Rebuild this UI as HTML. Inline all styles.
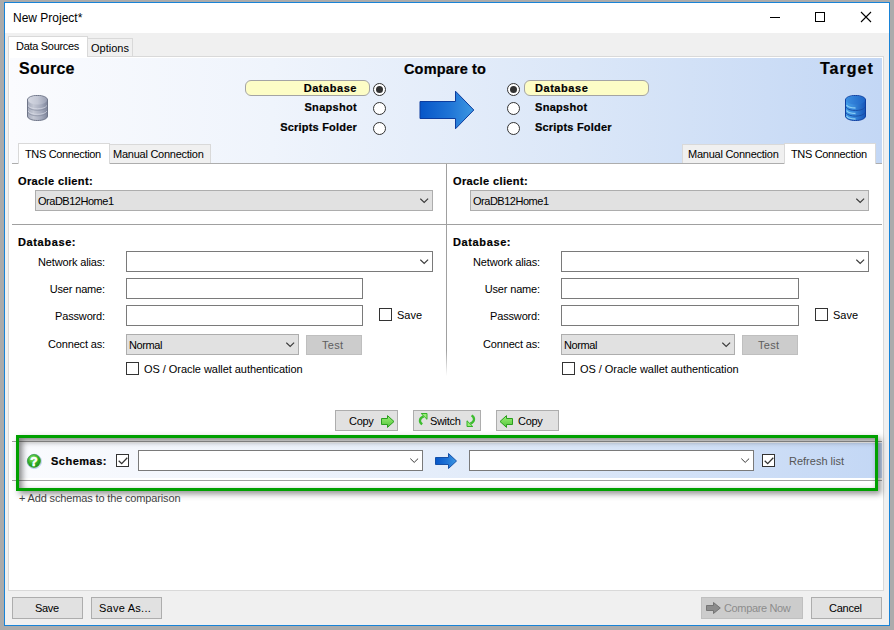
<!DOCTYPE html>
<html><head><meta charset="utf-8">
<style>
*{margin:0;padding:0;box-sizing:border-box}
html,body{width:894px;height:630px;overflow:hidden;background:#ababab;font-family:"Liberation Sans",sans-serif;font-size:11px;color:#000}
.a{position:absolute}
.t{position:absolute;white-space:nowrap;line-height:13px}
.b{font-weight:bold;-webkit-text-stroke:.2px #000}
#win{position:absolute;left:4px;top:2px;width:886px;height:624px;border:1px solid #1883d7;background:#f0f0f0}
#title{position:absolute;left:5px;top:3px;width:884px;height:30px;background:#fff}
.tab{position:absolute;border:1px solid #d9d9d9;border-bottom:none;background:#f0f0f0}
.tabsel{background:#fff}
#page{position:absolute;left:8px;top:56px;width:876px;height:535px;border:1px solid #d9d9d9;background:#fff}
#hdr{position:absolute;left:10px;top:58px;width:872px;height:106px;background:linear-gradient(90deg,#fafbfe 0%,#eff4fc 30%,#dbe7f8 65%,#c3d7f5 100%)}
.radio{position:absolute;width:13px;height:13px;border-radius:50%;border:1px solid #333;background:#fff}
.radio.on::after{content:"";position:absolute;left:2px;top:2px;width:7px;height:7px;border-radius:50%;background:#333}
.pill{position:absolute;height:16px;border:1px solid #a4a4a4;border-radius:6px;background:#fdfdc6}
.combo{position:absolute;border:1px solid #adadad;background:#e1e1e1}
.edit{position:absolute;border:1px solid #7a7a7a;background:#fff}
.chev{position:absolute;width:10px;height:6px}
.btn{position:absolute;border:1px solid #adadad;background:#e1e1e1;text-align:center}
.chk{position:absolute;width:13px;height:13px;border:1px solid #333;background:#fff}
</style></head><body>
<div id="win"></div>
<div id="title"></div>
<div class="t" style="left:13px;top:11px;font-size:12px;line-height:14px">New Project*</div>
<!-- window controls -->
<div class="a" style="left:770px;top:17px;width:10px;height:1px;background:#000"></div>
<div class="a" style="left:815px;top:12px;width:10px;height:10px;border:1px solid #000"></div>
<svg class="a" style="left:860px;top:11px" width="12" height="12" viewBox="0 0 12 12"><path d="M1 1L11 11M11 1L1 11" stroke="#000" stroke-width="1.1"/></svg>

<!-- main tabs -->
<div id="page"></div>
<div class="tab tabsel" style="left:8px;top:36px;width:80px;height:21px"></div>
<div class="tab" style="left:87px;top:38px;width:46px;height:18px"></div>
<div class="t" style="left:16px;top:40px;letter-spacing:-.3px">Data Sources</div>
<div class="t" style="left:91px;top:42px">Options</div>

<div id="hdr"></div>
<div class="t b" style="left:19px;top:60px;font-size:16px;line-height:18px;letter-spacing:.25px">Source</div>
<div class="t b" style="left:820px;top:60px;font-size:16px;line-height:18px;letter-spacing:1px">Target</div>
<div class="t b" style="left:404px;top:61px;font-size:14.5px;line-height:16px;letter-spacing:.15px">Compare to</div>

<!-- source db icon -->
<svg class="a" style="left:27px;top:95px" width="21" height="26" viewBox="0 0 21 26">
<defs>
<linearGradient id="gg" x1="0" x2="1"><stop offset="0" stop-color="#a4aabb"/><stop offset=".3" stop-color="#c3c7d3"/><stop offset=".7" stop-color="#a3a9bb"/><stop offset="1" stop-color="#7e859b"/></linearGradient>
<linearGradient id="ggt" x1="0" x2="1"><stop offset="0" stop-color="#d5d8e2"/><stop offset=".5" stop-color="#c4c8d5"/><stop offset="1" stop-color="#9aa0b4"/></linearGradient>
</defs>
<path d="M0.5 5C0.5 2.2 5 0.5 10.5 0.5S20.5 2.2 20.5 5V21C20.5 23.8 16 25.5 10.5 25.5S0.5 23.8 0.5 21Z" fill="url(#gg)" stroke="#6e7588" stroke-width="1"/>
<path d="M1 5C1 2.6 5.3 1 10.5 1S20 2.6 20 5S15.7 9.5 10.5 9.5S1 7.4 1 5Z" fill="url(#ggt)"/>
<path d="M1 10.5C2.5 13 7 13.8 10.5 13.8S18.5 13 20 10.5" stroke="#e2e5ee" stroke-width="1" fill="none" opacity=".6"/>
<path d="M1 12C2.5 14.5 7 15.3 10.5 15.3S18.5 14.5 20 12" stroke="#7c8397" stroke-width=".8" fill="none" opacity=".7"/>
<path d="M1 16C2.5 18.5 7 19.3 10.5 19.3S18.5 18.5 20 16" stroke="#e2e5ee" stroke-width="1" fill="none" opacity=".6"/>
<path d="M1 17.5C2.5 20 7 20.8 10.5 20.8S18.5 20 20 17.5" stroke="#7c8397" stroke-width=".8" fill="none" opacity=".7"/>
</svg>
<!-- target db icon -->
<svg class="a" style="left:845px;top:95px" width="21" height="26" viewBox="0 0 21 26">
<defs>
<linearGradient id="gb" x1="0" x2="1"><stop offset="0" stop-color="#3e9ae8"/><stop offset=".35" stop-color="#3b8fe0"/><stop offset="1" stop-color="#1655b8"/></linearGradient>
<linearGradient id="gbt" x1="0" x2="1"><stop offset="0" stop-color="#3b8ee0"/><stop offset="1" stop-color="#1f66c8"/></linearGradient>
</defs>
<path d="M0.5 5C0.5 2.2 5 0.5 10.5 0.5S20.5 2.2 20.5 5V21C20.5 23.8 16 25.5 10.5 25.5S0.5 23.8 0.5 21Z" fill="url(#gb)" stroke="#0f3fa0" stroke-width="1"/>
<path d="M1 5C1 2.6 5.3 1 10.5 1S20 2.6 20 5S15.7 9.5 10.5 9.5S1 7.4 1 5Z" fill="url(#gbt)"/>
<path d="M1.5 10C3 12.2 7 13 10.5 13" stroke="#a6e2f8" stroke-width="1.3" fill="none" opacity=".75"/>
<path d="M1 12.2C2.5 14.7 7 15.5 10.5 15.5S18.5 14.7 20 12.2" stroke="#1a4fa8" stroke-width="1" fill="none"/>
<path d="M1.5 15.5C3 17.7 7 18.5 10.5 18.5" stroke="#a6e2f8" stroke-width="1.3" fill="none" opacity=".75"/>
<path d="M1 17.8C2.5 20.3 7 21.1 10.5 21.1S18.5 20.3 20 17.8" stroke="#1a4fa8" stroke-width="1" fill="none"/>
<path d="M1.5 21C3 23.2 7 24 10.5 24" stroke="#a6e2f8" stroke-width="1.3" fill="none" opacity=".75"/>
</svg>

<!-- left radios -->
<div class="pill" style="left:245px;top:80px;width:125px"></div>
<div class="t b" style="right:537px;top:82px;letter-spacing:.55px">Database</div>
<div class="t b" style="right:537px;top:101px;letter-spacing:.3px">Snapshot</div>
<div class="t b" style="right:537px;top:121px;letter-spacing:.2px">Scripts Folder</div>
<div class="radio on" style="left:373px;top:83px"></div>
<div class="radio" style="left:373px;top:102px"></div>
<div class="radio" style="left:373px;top:122px"></div>
<!-- arrow -->
<svg class="a" style="left:419px;top:90px" width="56" height="40" viewBox="0 0 56 40">
<defs><linearGradient id="ga" x1="0" x2="1"><stop offset="0" stop-color="#0756c8"/><stop offset=".55" stop-color="#1f74d6"/><stop offset="1" stop-color="#3d98e2"/></linearGradient></defs>
<path d="M1 11.5H36.5V1.2L54.8 20L36.5 38.8V28.5H1Z" fill="url(#ga)" stroke="#0c3c9e" stroke-width="1"/>
</svg>
<!-- right radios -->
<div class="radio on" style="left:507px;top:83px"></div>
<div class="radio" style="left:507px;top:102px"></div>
<div class="radio" style="left:507px;top:122px"></div>
<div class="pill" style="left:524px;top:80px;width:125px"></div>
<div class="t b" style="left:535px;top:82px;letter-spacing:.55px">Database</div>
<div class="t b" style="left:535px;top:101px;letter-spacing:.3px">Snapshot</div>
<div class="t b" style="left:535px;top:121px;letter-spacing:.2px">Scripts Folder</div>

<!-- connection tabs -->
<div class="a" style="left:12px;top:163px;width:870px;height:1px;background:#adadad"></div>
<div class="tab tabsel" style="left:18px;top:143px;width:92px;height:21px"></div>
<div class="tab" style="left:109px;top:144px;width:102px;height:19px"></div>
<div class="t" style="left:25px;top:148px;letter-spacing:-.35px">TNS Connection</div>
<div class="t" style="left:113px;top:148px;letter-spacing:-.25px">Manual Connection</div>
<div class="tab" style="left:682px;top:144px;width:103px;height:19px"></div>
<div class="tab tabsel" style="left:784px;top:143px;width:92px;height:21px"></div>
<div class="t" style="left:688px;top:148px;letter-spacing:-.25px">Manual Connection</div>
<div class="t" style="left:791px;top:148px;letter-spacing:-.35px">TNS Connection</div>


<!-- divider lines -->
<div class="a" style="left:446px;top:164px;width:1px;height:212px;background:linear-gradient(180deg,#a0a0a0 0%,#a0a0a0 88%,rgba(160,160,160,0) 100%)"></div>
<div class="a" style="left:12px;top:224px;width:870px;height:1px;background:#a0a0a0"></div>

<!-- LEFT form -->
<div class="t b" style="left:18px;top:175px;letter-spacing:.38px">Oracle client:</div>
<div class="combo" style="left:35px;top:190px;width:398px;height:21px"></div>
<div class="t" style="left:38px;top:195px;letter-spacing:-.48px">OraDB12Home1</div>
<svg class="chev" style="left:420px;top:198px" width="10" height="6" viewBox="0 0 10 6"><path d="M0.3 0.6L4.2 4.4L8.1 0.6" stroke="#3a3a3a" stroke-width="1.2" fill="none"/></svg>

<div class="t b" style="left:18px;top:236px;letter-spacing:.62px">Database:</div>
<div class="t" style="right:789px;top:256px;letter-spacing:-.15px">Network alias:</div>
<div class="t" style="right:789px;top:283px;letter-spacing:-.15px">User name:</div>
<div class="t" style="right:789px;top:310px;letter-spacing:-.15px">Password:</div>
<div class="t" style="right:789px;top:338px;letter-spacing:-.15px">Connect as:</div>
<div class="edit" style="left:126px;top:251px;width:307px;height:21px"></div>
<svg class="chev" style="left:420px;top:259px" width="10" height="6" viewBox="0 0 10 6"><path d="M0.3 0.6L4.2 4.4L8.1 0.6" stroke="#3a3a3a" stroke-width="1.2" fill="none"/></svg>
<div class="edit" style="left:126px;top:278px;width:237px;height:21px"></div>
<div class="edit" style="left:126px;top:305px;width:237px;height:21px"></div>
<div class="chk" style="left:379px;top:308px"></div>
<div class="t" style="left:397px;top:309px">Save</div>
<div class="combo" style="left:126px;top:334px;width:173px;height:21px"></div>
<div class="t" style="left:129px;top:339px;letter-spacing:-.4px">Normal</div>
<svg class="chev" style="left:286px;top:342px" width="10" height="6" viewBox="0 0 10 6"><path d="M0.3 0.6L4.2 4.4L8.1 0.6" stroke="#3a3a3a" stroke-width="1.2" fill="none"/></svg>
<div class="btn" style="left:306px;top:335px;width:56px;height:20px;background:#cccccc;border-color:#bfbfbf"></div>
<div class="t" style="left:322px;top:339px;color:#5e5e5e;letter-spacing:.3px">Test</div>
<div class="chk" style="left:126px;top:362px"></div>
<div class="t" style="left:144px;top:363px;letter-spacing:-.05px">OS / Oracle wallet authentication</div>

<!-- RIGHT form -->
<div class="t b" style="left:453px;top:175px;letter-spacing:.38px">Oracle client:</div>
<div class="combo" style="left:470px;top:190px;width:399px;height:21px"></div>
<div class="t" style="left:473px;top:195px;letter-spacing:-.48px">OraDB12Home1</div>
<svg class="chev" style="left:856px;top:198px" width="10" height="6" viewBox="0 0 10 6"><path d="M0.3 0.6L4.2 4.4L8.1 0.6" stroke="#3a3a3a" stroke-width="1.2" fill="none"/></svg>

<div class="t b" style="left:453px;top:236px;letter-spacing:.62px">Database:</div>
<div class="t" style="right:354px;top:256px;letter-spacing:-.15px">Network alias:</div>
<div class="t" style="right:354px;top:283px;letter-spacing:-.15px">User name:</div>
<div class="t" style="right:354px;top:310px;letter-spacing:-.15px">Password:</div>
<div class="t" style="right:354px;top:338px;letter-spacing:-.15px">Connect as:</div>
<div class="edit" style="left:561px;top:251px;width:308px;height:21px"></div>
<svg class="chev" style="left:856px;top:259px" width="10" height="6" viewBox="0 0 10 6"><path d="M0.3 0.6L4.2 4.4L8.1 0.6" stroke="#3a3a3a" stroke-width="1.2" fill="none"/></svg>
<div class="edit" style="left:561px;top:278px;width:238px;height:21px"></div>
<div class="edit" style="left:561px;top:305px;width:238px;height:21px"></div>
<div class="chk" style="left:815px;top:308px"></div>
<div class="t" style="left:833px;top:309px">Save</div>
<div class="combo" style="left:561px;top:334px;width:174px;height:21px"></div>
<div class="t" style="left:564px;top:339px;letter-spacing:-.4px">Normal</div>
<svg class="chev" style="left:722px;top:342px" width="10" height="6" viewBox="0 0 10 6"><path d="M0.3 0.6L4.2 4.4L8.1 0.6" stroke="#3a3a3a" stroke-width="1.2" fill="none"/></svg>
<div class="btn" style="left:742px;top:335px;width:56px;height:20px;background:#cccccc;border-color:#bfbfbf"></div>
<div class="t" style="left:758px;top:339px;color:#5e5e5e;letter-spacing:.3px">Test</div>
<div class="chk" style="left:562px;top:362px"></div>
<div class="t" style="left:580px;top:363px;letter-spacing:-.05px">OS / Oracle wallet authentication</div>

<!-- Copy / Switch / Copy -->
<div class="btn" style="left:335px;top:410px;width:63px;height:21px"></div>
<div class="t" style="left:349px;top:415px;letter-spacing:-.3px">Copy</div>
<svg class="a" style="left:381px;top:415px" width="14" height="13" viewBox="0 0 14 13">
<defs><linearGradient id="gr1" x1="0" y1="0" x2="0" y2="1"><stop offset="0" stop-color="#9df078"/><stop offset="1" stop-color="#52c43a"/></linearGradient></defs>
<path d="M0.5 3.5H6.5V0.6L13 6.5L6.5 12.4V9.5H0.5Z" fill="url(#gr1)" stroke="#2a9e1e" stroke-width="1"/></svg>
<div class="btn" style="left:413px;top:410px;width:68px;height:21px"></div>
<div class="t" style="left:430px;top:415px;letter-spacing:-.33px">Switch</div>
<svg class="a" style="left:414px;top:410px" width="20" height="20" viewBox="0 0 20 20">
<path d="M8.2 14.3C5 12 5 8.5 9.6 6.4" stroke="#3cbc2e" stroke-width="2.3" fill="none"/>
<path d="M7.2 3.5H13V9.3Z" fill="#97ee74" stroke="#36b02a" stroke-width="1" stroke-linejoin="round"/></svg>
<svg class="a" style="left:460px;top:410px" width="20" height="20" viewBox="0 0 20 20">
<path d="M11.6 5.4C15 7.6 15 11.5 10.4 13.6" stroke="#3cbc2e" stroke-width="2.3" fill="none"/>
<path d="M7 10.8V16.5H12.8Z" fill="#97ee74" stroke="#36b02a" stroke-width="1" stroke-linejoin="round"/></svg>
<div class="btn" style="left:496px;top:410px;width:63px;height:21px"></div>
<div class="t" style="left:518px;top:415px;letter-spacing:-.3px">Copy</div>
<svg class="a" style="left:499px;top:415px" width="14" height="13" viewBox="0 0 14 13">
<path d="M13.5 3.5H7.5V0.6L1 6.5L7.5 12.4V9.5H13.5Z" fill="url(#gr1)" stroke="#2a9e1e" stroke-width="1"/></svg>

<!-- schemas bar -->
<div class="a" style="left:12px;top:441px;width:870px;height:1px;background:#a0a0a0"></div>
<div class="a" style="left:12px;top:480px;width:870px;height:1px;background:#a0a0a0"></div>
<div class="a" style="left:12px;top:443px;width:870px;height:35px;background:linear-gradient(90deg,#fafbfe 0%,#eff4fc 30%,#dbe7f8 65%,#c3d7f5 100%)"></div>
<svg class="a" style="left:26px;top:453px" width="17" height="17" viewBox="0 0 17 17">
<defs><radialGradient id="gq" cx=".4" cy=".3" r=".75"><stop offset="0" stop-color="#8ee86a"/><stop offset=".6" stop-color="#2fae28"/><stop offset="1" stop-color="#168a16"/></radialGradient></defs>
<circle cx="8.3" cy="8.4" r="7.1" fill="#fff" stroke="#b4caef" stroke-width="1"/>
<circle cx="8" cy="8" r="6.5" fill="url(#gq)" stroke="#1c8c1c" stroke-width=".6"/>
<text x="8" y="12.6" text-anchor="middle" font-family="Liberation Sans" font-weight="bold" font-size="12" fill="#fff" stroke="#fff" stroke-width=".7">?</text></svg>
<div class="t b" style="left:51px;top:455px;letter-spacing:.5px">Schemas:</div>
<div class="chk" style="left:116px;top:454px"></div>
<svg class="a" style="left:118px;top:456px" width="10" height="10" viewBox="-.5 -.5 10 10"><path d="M0.2 4.2L3.2 7.2L8.8 1.2" stroke="#333" stroke-width="1.25" fill="none"/></svg>
<div class="edit" style="left:138px;top:450px;width:285px;height:21px"></div>
<svg class="chev" style="left:410px;top:458px" width="10" height="6" viewBox="0 0 10 6"><path d="M0.3 0.6L4.2 4.4L8.1 0.6" stroke="#3a3a3a" stroke-width="1" fill="none"/></svg>
<svg class="a" style="left:435px;top:453px" width="22" height="16" viewBox="0 0 22 16">
<path d="M0.5 4.5H13.5V0.5L21.5 8L13.5 15.5V11.5H0.5Z" fill="url(#ga)" stroke="#1450a8" stroke-width="1"/></svg>
<div class="edit" style="left:469px;top:450px;width:285px;height:21px"></div>
<svg class="chev" style="left:741px;top:458px" width="10" height="6" viewBox="0 0 10 6"><path d="M0.3 0.6L4.2 4.4L8.1 0.6" stroke="#3a3a3a" stroke-width="1" fill="none"/></svg>
<div class="chk" style="left:762px;top:454px"></div>
<svg class="a" style="left:764px;top:456px" width="10" height="10" viewBox="-.5 -.5 10 10"><path d="M0.2 4.2L3.2 7.2L8.8 1.2" stroke="#333" stroke-width="1.25" fill="none"/></svg>
<div class="t" style="left:789px;top:455px;color:#555">Refresh list</div>
<!-- green highlight -->
<div class="a" style="left:16px;top:435px;width:862px;height:56px;border:3px solid #00a000;box-shadow:3px 3px 6px rgba(0,0,0,.42), inset 3px 3px 6px rgba(0,0,0,.5)"></div>

<div class="t" style="left:19px;top:492px;color:#424242;letter-spacing:-.15px">+ Add schemas to the comparison</div>

<!-- bottom buttons -->
<div class="btn" style="left:12px;top:597px;width:71px;height:22px"></div>
<div class="t" style="left:35px;top:602px;letter-spacing:-.3px">Save</div>
<div class="btn" style="left:91px;top:597px;width:71px;height:22px"></div>
<div class="t" style="left:99px;top:602px;letter-spacing:.25px">Save As...</div>
<div class="btn" style="left:701px;top:597px;width:102px;height:22px;background:#cccccc;border-color:#bfbfbf"></div>
<svg class="a" style="left:706px;top:602px" width="15" height="12" viewBox="0 0 15 12"><path d="M0.5 3.5H7.5V0.5L14.3 6L7.5 11.5V8.5H0.5Z" fill="#8c8c8c" stroke="#6e6e6e" stroke-width=".9"/></svg>
<div class="t" style="left:724px;top:602px;color:#8d8d8d;letter-spacing:-.35px">Compare Now</div>
<div class="btn" style="left:811px;top:597px;width:71px;height:22px"></div>
<div class="t" style="left:829px;top:602px;letter-spacing:-.25px">Cancel</div>

</body></html>
